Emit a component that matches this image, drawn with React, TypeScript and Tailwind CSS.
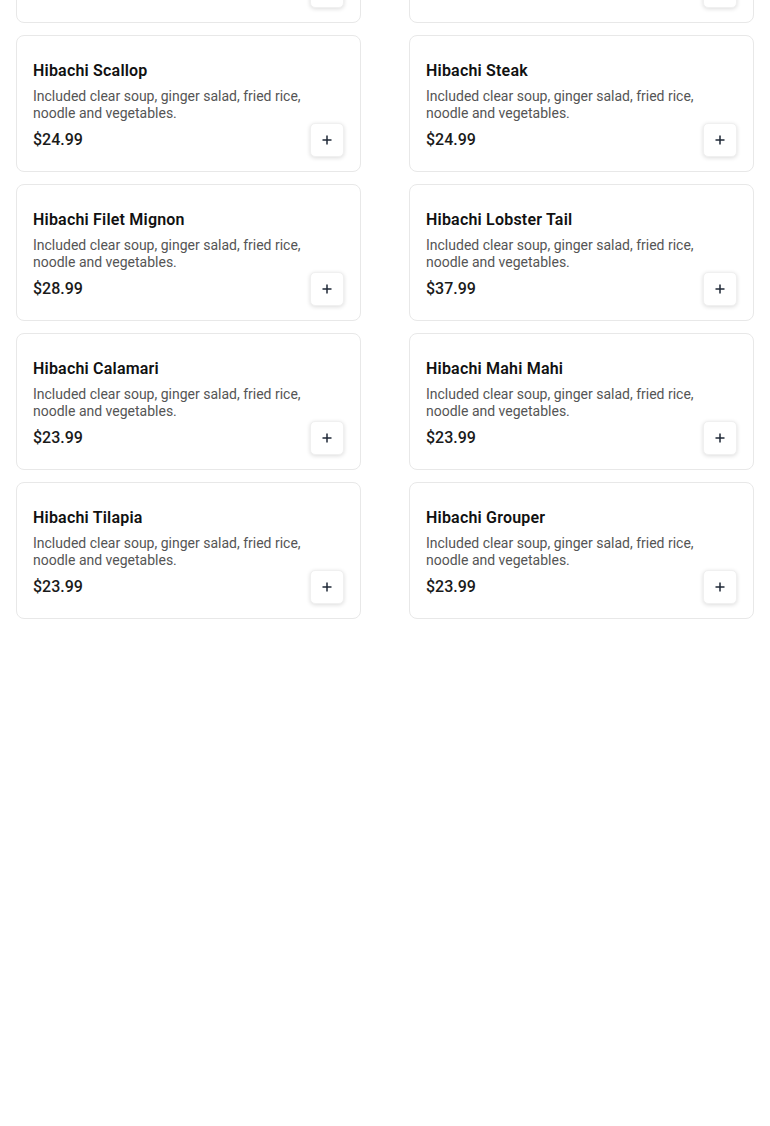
import React from "react";

type Item = { name: string; price: string };

const items: Item[] = [
  { name: "Hibachi Chicken", price: "$21.99" },
  { name: "Hibachi Shrimp", price: "$23.99" },
  { name: "Hibachi Scallop", price: "$24.99" },
  { name: "Hibachi Steak", price: "$24.99" },
  { name: "Hibachi Filet Mignon", price: "$28.99" },
  { name: "Hibachi Lobster Tail", price: "$37.99" },
  { name: "Hibachi Calamari", price: "$23.99" },
  { name: "Hibachi Mahi Mahi", price: "$23.99" },
  { name: "Hibachi Tilapia", price: "$23.99" },
  { name: "Hibachi Grouper", price: "$23.99" },
];

function PlusIcon() {
  return (
    <svg width="12" height="12" viewBox="0 0 12 12" fill="none">
      <path d="M6 1.5v9M1.5 6h9" stroke="#1f2937" strokeWidth="1.5" />
    </svg>
  );
}

function Card({ item }: { item: Item }) {
  return (
    <div className="rounded-lg border border-[#e8e8e8] bg-white px-4 pt-[23px] pb-[14px]">
      <div className="text-[16px] leading-6 font-semibold tracking-[0.2px] text-[#111]">{item.name}</div>
      <p className="mt-[5px] pr-10 text-[14px] leading-[17px] text-[#555]">
        Included clear soup, ginger salad, fried rice, noodle and vegetables.
      </p>
      <div className="mt-px flex items-center justify-between">
        <span className="text-[16px] leading-6 font-medium text-[#1a1a1a]">{item.price}</span>
        <button className="flex h-[34px] w-[34px] items-center justify-center rounded-[5px] border border-[#f0f0f0] bg-white shadow-[0_1px_4px_rgba(0,0,0,0.14)]">
          <PlusIcon />
        </button>
      </div>
    </div>
  );
}

export default function App() {
  return (
    <div
      className="h-[1126px] w-full overflow-hidden bg-white"
      style={{ fontFamily: "Roboto, 'Noto Sans', sans-serif" }}
    >
      <div className="-mt-[114px] grid grid-cols-2 gap-x-12 gap-y-3 px-4">
        {items.map((it) => (
          <Card key={it.name} item={it} />
        ))}
      </div>
    </div>
  );
}
